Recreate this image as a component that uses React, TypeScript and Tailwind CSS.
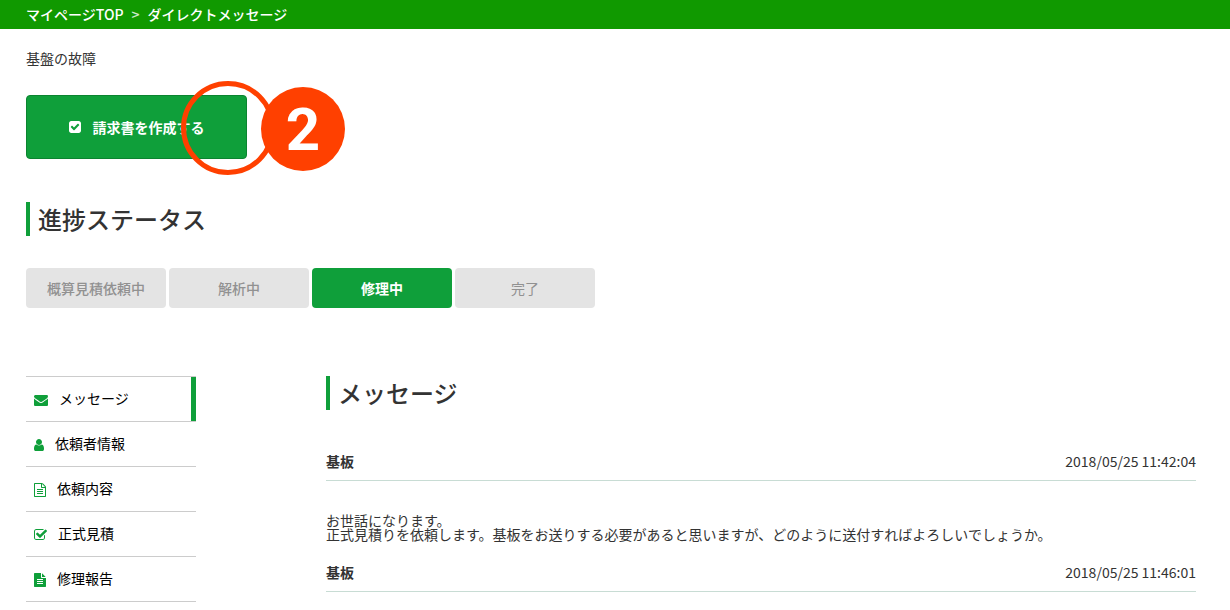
/*
 * Direct message page: breadcrumb, progress status, side menu and message thread
 */
const ICONS = {
  checkSquare: {
    viewBox: "128 0 1536 1792",
    className: "h-3.5 w-3",
    d: "M813 1299l614-614q19-19 19-45t-19-45l-102-102q-19-19-45-19t-45 19l-467 467-211-211q-19-19-45-19t-45 19l-102 102q-19 19-19 45t19 45l358 358q19 19 45 19t45-19zm851-883v960q0 119-84.5 203.5t-203.5 84.5h-960q-119 0-203.5-84.5t-84.5-203.5v-960q0-119 84.5-203.5t203.5-84.5h960q119 0 203.5 84.5t84.5 203.5z",
  },
  envelope: {
    viewBox: "0 0 1792 1792",
    className: "h-3.5 w-3.5",
    d: "M1792 710v794q0 66-47 113t-113 47h-1472q-66 0-113-47t-47-113v-794q44 49 101 87 362 246 497 345 57 42 92.5 65.5t94.5 48 110 24.5h2q51 0 110-24.5t94.5-48 92.5-65.5q170-123 498-345 57-39 100-87zm0-294q0 79-49 151t-122 123q-376 261-468 325-10 7-42.5 31t-54 38.5-52 32.5-57.5 27-50 9h-2q-23 0-50-9t-57.5-27-52-32.5-54-38.5-42.5-31q-91-64-262-182.5t-205-142.5q-62-42-117-115.5t-55-136.5q0-78 41.5-130t118.5-52h1472q65 0 112.5 47t47.5 113z",
  },
  user: {
    viewBox: "256 0 1280 1792",
    className: "h-3.5 w-2.5",
    d: "M1536 1399q0 109-62.5 187t-150.5 78h-854q-88 0-150.5-78t-62.5-187q0-85 8.5-160.5t31.5-152 58.5-131 94-89 134.5-34.5q131 128 313 128t313-128q76 0 134.5 34.5t94 89 58.5 131 31.5 152 8.5 160.5zm-256-887q0 159-112.5 271.5t-271.5 112.5-271.5-112.5-112.5-271.5 112.5-271.5 271.5-112.5 271.5 112.5 112.5 271.5z",
  },
  fileOutline: {
    viewBox: "128 0 1536 1792",
    className: "h-3.5 w-3",
    d: "M1596 380q28 28 48 76t20 88v1152q0 40-28 68t-68 28h-1344q-40 0-68-28t-28-68v-1600q0-40 28-68t68-28h896q40 0 88 20t76 48zm-444-244v376h376q-10-29-22-41l-313-313q-12-12-41-22zm384 1528v-1024h-416q-40 0-68-28t-28-68v-416h-768v1536h1280zm-1024-864q0-14 9-23t23-9h704q14 0 23 9t9 23v64q0 14-9 23t-23 9h-704q-14 0-23-9t-9-23v-64zm736 224q14 0 23 9t9 23v64q0 14-9 23t-23 9h-704q-14 0-23-9t-9-23v-64q0-14 9-23t23-9h704zm0 256q14 0 23 9t9 23v64q0 14-9 23t-23 9h-704q-14 0-23-9t-9-23v-64q0-14 9-23t23-9h704z",
  },
  checkOutline: {
    viewBox: "64 0 1664 1792",
    className: "h-3.5 w-[13px]",
    d: "M1472 930v318q0 119-84.5 203.5t-203.5 84.5h-832q-119 0-203.5-84.5t-84.5-203.5v-832q0-119 84.5-203.5t203.5-84.5h832q63 0 117 25 15 7 18 23 3 17-9 29l-49 49q-10 10-23 10-3 0-9-2-23-6-45-6h-832q-66 0-113 47t-47 113v832q0 66 47 113t113 47h832q66 0 113-47t47-113v-254q0-13 9-22l64-64q10-10 23-10 6 0 12 3 20 8 20 29zm231-489l-814 814q-24 24-57 24t-57-24l-430-430q-24-24-24-57t24-57l110-110q24-24 57-24t57 24l263 263 647-647q24-24 57-24t57 24l110 110q24 24 24 57t-24 57z",
  },
  file: {
    viewBox: "128 0 1536 1792",
    className: "h-3.5 w-3",
    d: "M1596 476q14 14 28 36h-472v-472q22 14 36 28zm-476 164h544v1056q0 40-28 68t-68 28h-1344q-40 0-68-28t-28-68v-1600q0-40 28-68t68-28h800v544q0 40 28 68t68 28zm160 736v-64q0-14-9-23t-23-9h-704q-14 0-23 9t-9 23v64q0 14 9 23t23 9h704q14 0 23-9t9-23zm0-256v-64q0-14-9-23t-23-9h-704q-14 0-23 9t-9 23v64q0 14 9 23t23 9h704q14 0 23-9t9-23zm0-256v-64q0-14-9-23t-23-9h-704q-14 0-23 9t-9 23v64q0 14 9 23t23 9h704q14 0 23-9t9-23z",
  },
};

type IconName = keyof typeof ICONS;

const STATUSES = ["概算見積依頼中", "解析中", "修理中", "完了"];
const CURRENT_STATUS = 2;

const MENU: { label: string; href: string; icon: IconName }[] = [
  { label: "メッセージ", href: "#message", icon: "envelope" },
  { label: "依頼者情報", href: "#client", icon: "user" },
  { label: "依頼内容", href: "#request", icon: "fileOutline" },
  { label: "正式見積", href: "#estimate", icon: "checkOutline" },
  { label: "修理報告", href: "#report", icon: "file" },
];

const MESSAGES = [
  {
    from: "基板",
    date: "2018/05/25 11:42:04",
    body: "お世話になります。\n正式見積りを依頼します。基板をお送りする必要があると思いますが、どのように送付すればよろしいでしょうか。",
  },
  { from: "基板", date: "2018/05/25 11:46:01", body: "" },
];

function statusClass(index: number) {
  if (index === CURRENT_STATUS) return "bg-[#0f9f3a] font-bold text-white";
  if (index < CURRENT_STATUS) return "bg-[#e4e4e4] font-medium text-[#919191]";
  return "bg-[#e4e4e4] text-[#919191]";
}

function Icon({ name }: { name: IconName }) {
  const { viewBox, className, d } = ICONS[name];
  return (
    <svg viewBox={viewBox} className={`${className} shrink-0 fill-current`} aria-hidden="true">
      <path d={d} />
    </svg>
  );
}

function Heading({ children }: { children: string }) {
  return (
    <h2 className="border-l-4 border-[#0f9f3a] pl-2 text-2xl leading-[34px] font-medium">
      {children}
    </h2>
  );
}

export default function App() {
  return (
    <div className="min-h-screen bg-white font-['Noto_Sans_CJK_JP',sans-serif] text-sm text-[#333]">
      <nav className="flex gap-2 bg-[#109900] pl-[26px] leading-[29px] font-medium text-white" aria-label="breadcrumb">
        <a href="#mypage">マイページTOP</a>
        <span className="opacity-80">&gt;</span>
        <a href="#message">ダイレクトメッセージ</a>
      </nav>

      <div className="pt-[19px] pr-[34px] pb-2 pl-[26px]">
        <p className="leading-5">基盤の故障</p>

        <div className="relative mt-[27px] inline-block align-top">
          <button className="flex h-16 w-[221px] items-center justify-center gap-3 rounded border border-[#0b8430] bg-[#0f9f3a] font-bold text-white">
            <Icon name="checkSquare" />
            請求書を作成する
          </button>
          {/* Step marker */}
          <span className="absolute -top-3.5 left-[155px] size-[94px] rounded-full border-[5px] border-[#ff4000]" />
          <span className="absolute -top-2 left-[235px] flex size-[84px] items-center justify-center rounded-full bg-[#ff4000] pt-0.5 font-[Roboto,sans-serif] text-[60px] font-bold text-white">
            2
          </span>
        </div>

        <div className="mt-[43px]">
          <Heading>進捗ステータス</Heading>
        </div>
        <ol className="mt-8 flex gap-[3px]">
          {STATUSES.map((status, index) => (
            <li
              key={status}
              className={`w-[140px] rounded text-center leading-10 ${statusClass(index)}`}
            >
              {status}
            </li>
          ))}
        </ol>

        <div className="mt-[68px] flex items-start gap-[130px]">
          <ul className="w-[170px] shrink-0 border-t border-[#ccc]">
            {MENU.map((item, index) => (
              <li key={item.label} className="border-b border-[#ccc]">
                <a
                  href={item.href}
                  className={`flex h-11 items-center gap-[11px] pl-2 text-black ${
                    index === 0 ? "border-r-[5px] border-r-[#0f9f3a]" : ""
                  }`}
                >
                  <span className="pt-0.5 text-[#0f9f3a]">
                    <Icon name={item.icon} />
                  </span>
                  <span className="pb-0.5">{item.label}</span>
                </a>
              </li>
            ))}
          </ul>

          <main className="min-w-0 flex-1">
            <Heading>メッセージ</Heading>
            <div className="mt-[41px] flex flex-col gap-[21px]">
              {MESSAGES.map((message) => (
                <article key={message.date}>
                  <header className="flex justify-between border-b border-[#c8dcd4] pb-[9px] leading-5">
                    <h3 className="font-bold">{message.from}</h3>
                    <time>{message.date}</time>
                  </header>
                  {message.body && (
                    <p className="pt-8 leading-[14px] whitespace-pre-line">{message.body}</p>
                  )}
                </article>
              ))}
            </div>
          </main>
        </div>
      </div>
    </div>
  );
}
